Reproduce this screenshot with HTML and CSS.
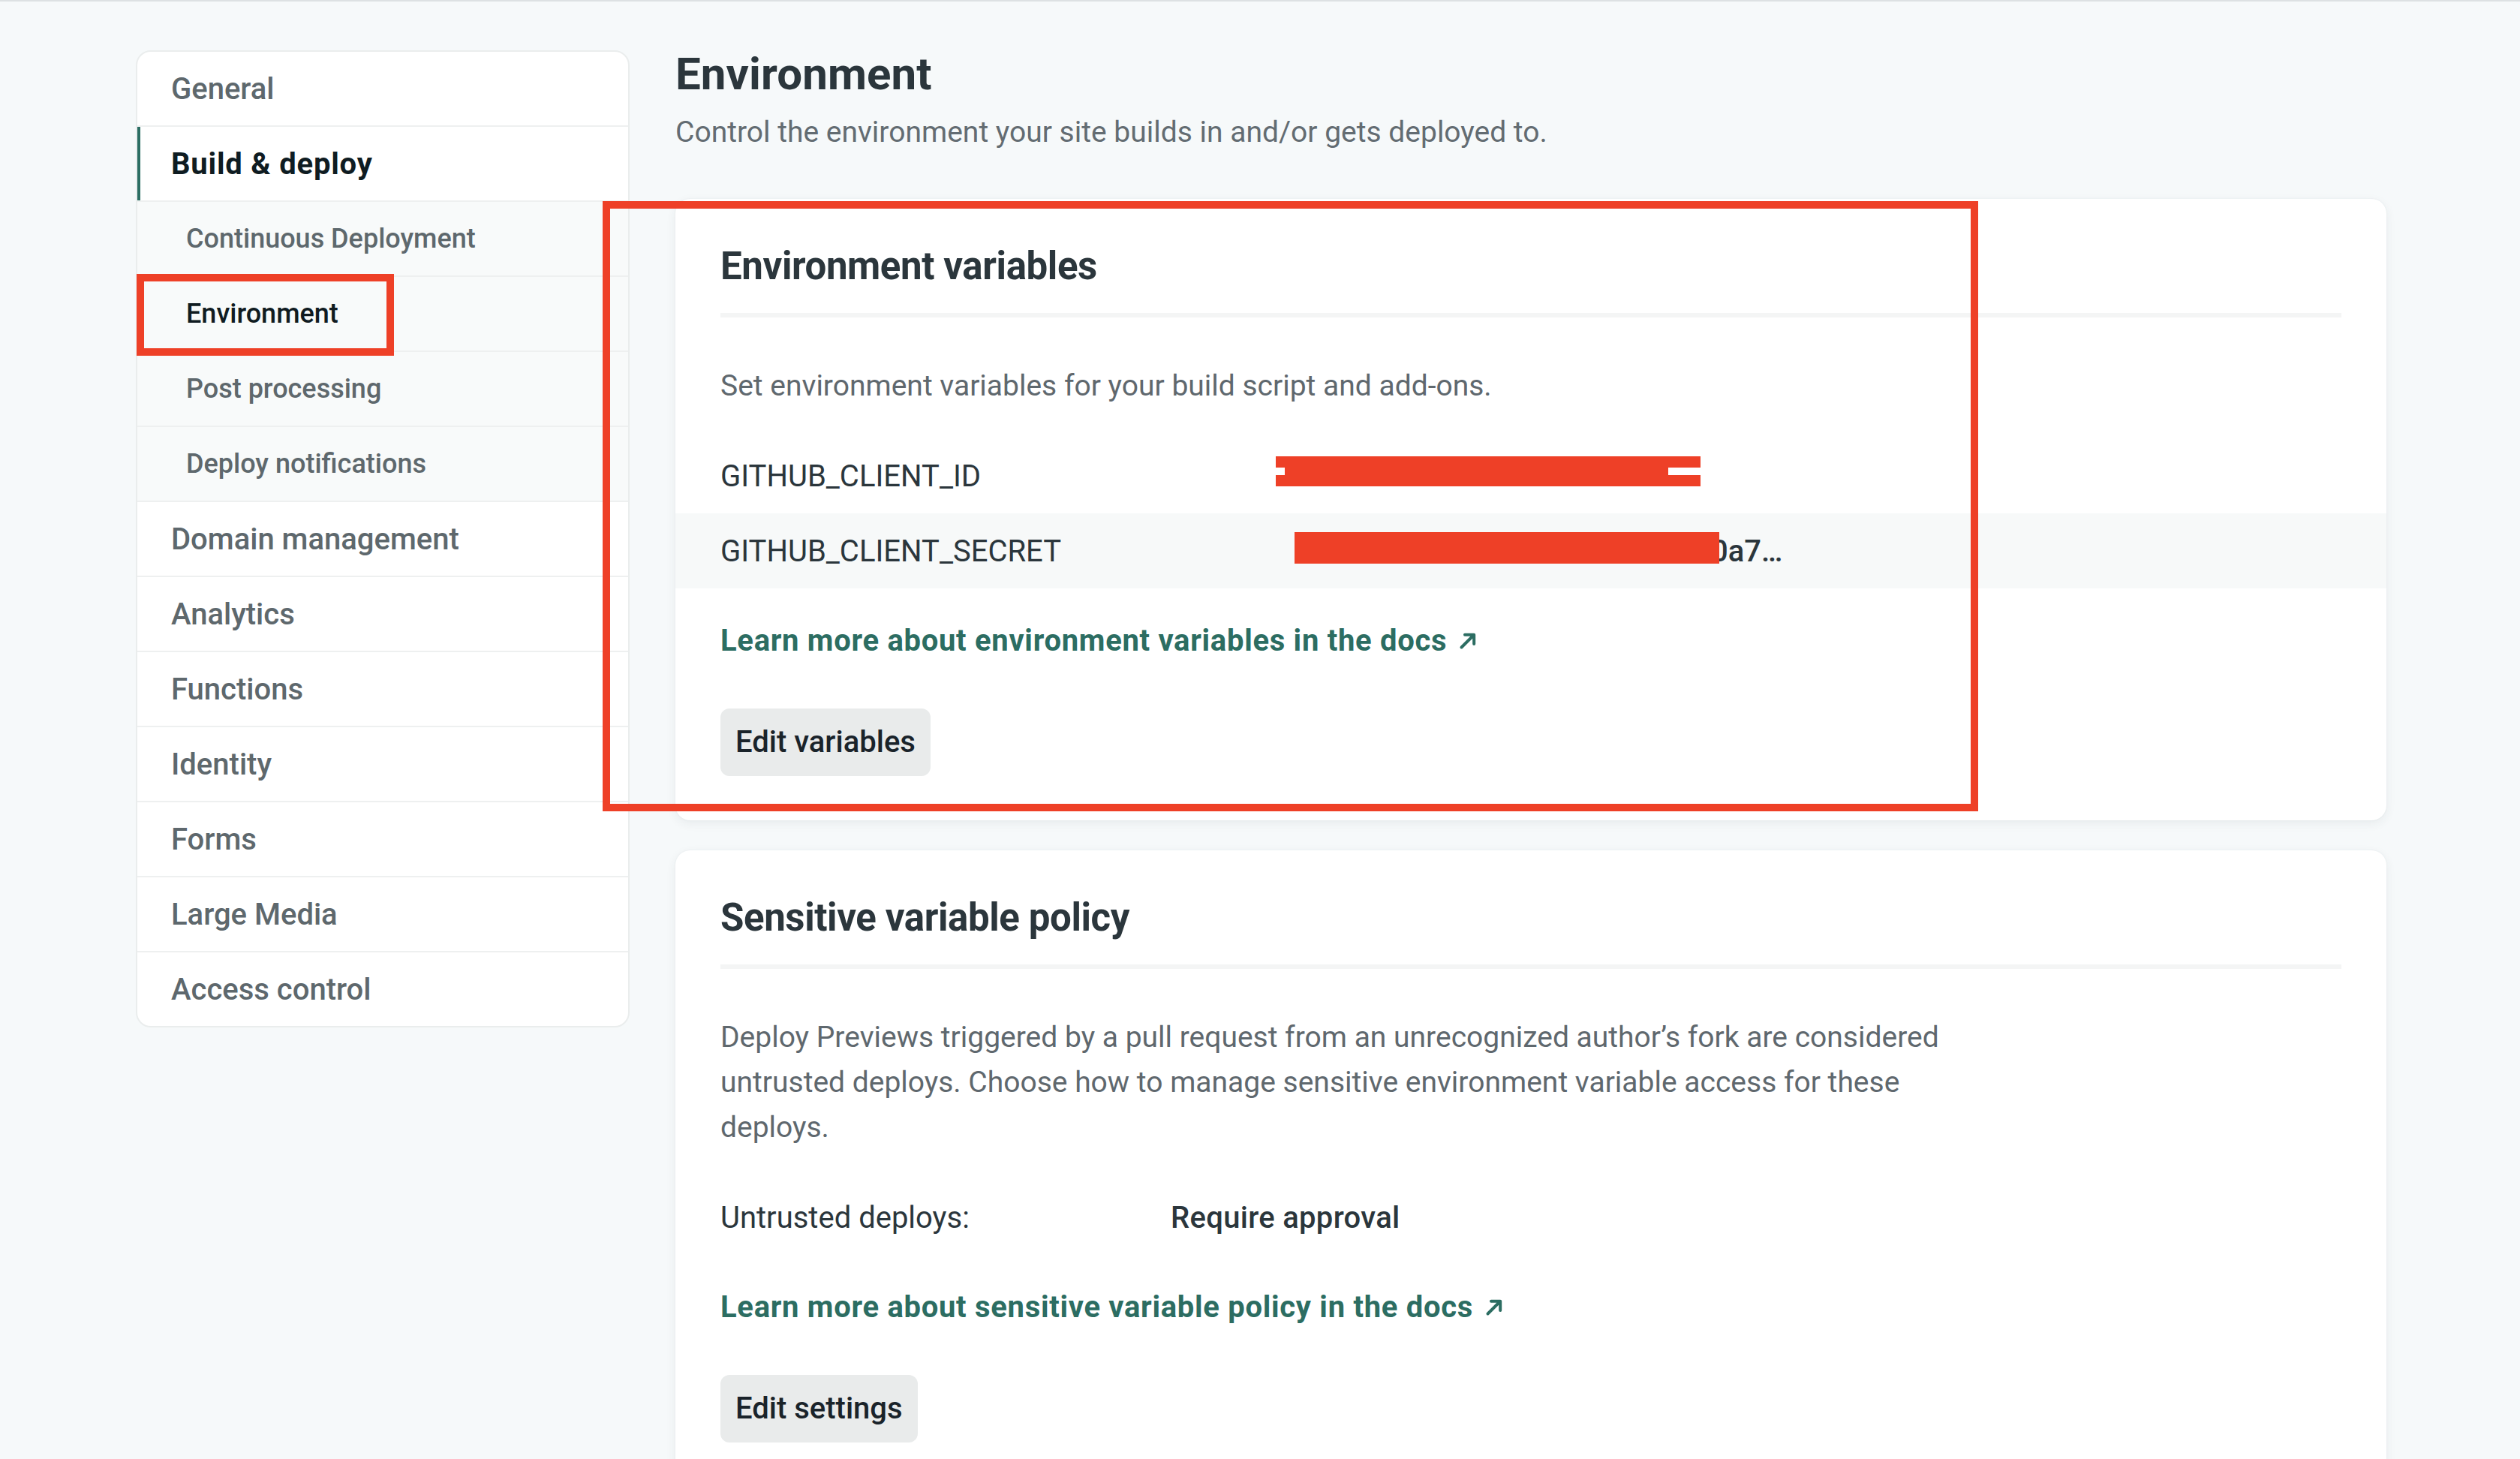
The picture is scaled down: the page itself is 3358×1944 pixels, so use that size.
FILE: index.html
```html
<!DOCTYPE html>
<html lang="en">
<head>
<meta charset="utf-8">
<title>Environment</title>
<link rel="stylesheet" href="styles.css">
</head>
<body>
<div class="topline"></div>
<div class="layout">
  <nav class="sidenav">
    <a class="nav-item">General</a>
    <a class="nav-item nav-active">Build &amp; deploy</a>
    <a class="nav-sub">Continuous Deployment</a>
    <a class="nav-sub nav-sub-active">Environment</a>
    <a class="nav-sub">Post processing</a>
    <a class="nav-sub">Deploy notifications</a>
    <a class="nav-item">Domain management</a>
    <a class="nav-item">Analytics</a>
    <a class="nav-item">Functions</a>
    <a class="nav-item">Identity</a>
    <a class="nav-item">Forms</a>
    <a class="nav-item">Large Media</a>
    <a class="nav-item nav-last">Access control</a>
  </nav>
  <main class="main">
    <h1 class="page-title">Environment</h1>
    <p class="page-sub">Control the environment your site builds in and/or gets deployed to.</p>

    <section class="card">
      <h2 class="card-title">Environment variables</h2>
      <div class="card-body">
        <p class="desc">Set environment variables for your build script and add-ons.</p>
        <div class="var-list">
          <div class="var-row">
            <span class="var-key">GITHUB_CLIENT_ID</span>
            <span class="var-value"><span class="redact redact-one"></span></span>
          </div>
          <div class="var-row var-row-alt">
            <span class="var-key">GITHUB_CLIENT_SECRET</span>
            <span class="var-value"><span class="redact redact-two"></span><span class="var-tail">0a7…</span></span>
          </div>
        </div>
        <a class="doc-link">Learn more about environment variables in the docs<svg class="ext" viewBox="0 0 24 24" aria-hidden="true"><path d="M3.5 20.5 L19 5 M8 3.8 H20.2 V16" fill="none" stroke="currentColor" stroke-width="4" stroke-linecap="round" stroke-linejoin="round"/></svg></a>
        <button class="btn">Edit variables</button>
      </div>
    </section>

    <section class="card">
      <h2 class="card-title">Sensitive variable policy</h2>
      <div class="card-body">
        <p class="desc desc-wide">Deploy Previews triggered by a pull request from an unrecognized author’s fork are considered untrusted deploys. Choose how to manage sensitive environment variable access for these deploys.</p>
        <div class="policy-row">
          <span class="policy-key">Untrusted deploys:</span>
          <span class="policy-value">Require approval</span>
        </div>
        <a class="doc-link">Learn more about sensitive variable policy in the docs<svg class="ext" viewBox="0 0 24 24" aria-hidden="true"><path d="M3.5 20.5 L19 5 M8 3.8 H20.2 V16" fill="none" stroke="currentColor" stroke-width="4" stroke-linecap="round" stroke-linejoin="round"/></svg></a>
        <button class="btn">Edit settings</button>
      </div>
    </section>
  </main>
</div>
<div class="annot annot-nav"></div>
<div class="annot annot-card"></div>
</body>
</html>
```

FILE: styles.css
```css
* { box-sizing: border-box; }

html, body {
  margin: 0;
  padding: 0;
}

body {
  background: #f6f9fa;
  font-family: Roboto, "Noto Sans", "Liberation Sans", sans-serif;
  color: #2d383e;
  width: 3358px;
  height: 1944px;
  overflow: hidden;
  position: relative;
}

.topline {
  height: 2px;
  background: #dde1e3;
}

.layout {
  display: flex;
  align-items: flex-start;
  gap: 61px;
  padding: 65px 178px 0 181px;
}

/* ---------- sidebar ---------- */
.sidenav {
  flex: none;
  width: 658px;
  background: #ffffff;
  border: 2px solid #eaeded;
  border-radius: 20px;
  overflow: hidden;
  display: flex;
  flex-direction: column;
}

.nav-item,
.nav-sub {
  display: flex;
  align-items: center;
  height: 100px;
  border-bottom: 2px solid #eef0f0;
  text-decoration: none;
  white-space: nowrap;
}

.nav-item {
  padding-left: 45px;
  font-size: 40px;
  font-weight: 500;
  color: #5e686d;
}

.nav-active {
  font-weight: 700;
  letter-spacing: 0.8px;
  color: #0f1c22;
  box-shadow: inset 4px 0 0 #2b6e63;
}

.nav-sub {
  padding-left: 65px;
  font-size: 36px;
  font-weight: 500;
  color: #5e686d;
  background: #f8fafa;
}

.nav-sub-active {
  color: #101b21;
}

.nav-last {
  border-bottom: 0;
  height: 98px;
}

/* ---------- main ---------- */
.main {
  flex: 1;
  min-width: 0;
  padding-top: 2px;
}

.page-title {
  margin: 0;
  font-size: 60px;
  line-height: 60px;
  font-weight: 700;
  letter-spacing: 0.1px;
  color: #2b363c;
}

.page-sub {
  margin: 17px 0 0;
  font-size: 39px;
  line-height: 60px;
  color: #636c72;
}

.card {
  margin-top: 59px;
  background: #ffffff;
  border-radius: 20px;
  padding: 60px 60px 59px;
  box-shadow: 0 4px 14px rgba(40, 55, 65, 0.07), 0 0 3px rgba(40, 55, 65, 0.05);
}

.card + .card {
  margin-top: 40px;
}

.card-title {
  margin: 0;
  font-size: 51px;
  line-height: 60px;
  font-weight: 700;
  letter-spacing: -0.4px;
  color: #2b363c;
  padding-bottom: 32px;
  border-bottom: 6px solid #f4f5f5;
}

.card-body {
  padding-top: 61px;
  display: flex;
  flex-direction: column;
  align-items: flex-start;
}

.desc {
  margin: 0;
  font-size: 39px;
  line-height: 60px;
  color: #5f686e;
}

.desc-wide {
  max-width: 1650px;
}

.var-list {
  align-self: stretch;
  margin: 40px -60px 0;
}

.var-row {
  display: flex;
  align-items: center;
  height: 100px;
  padding: 0 60px;
}

.var-row-alt {
  background: #f7f9f9;
}

.var-key {
  flex: none;
  width: 740px;
  font-size: 40px;
  color: #2b363c;
}

.var-value {
  display: flex;
  align-items: center;
  font-size: 40px;
  font-weight: 500;
  color: #2b363c;
}

.redact {
  display: block;
  background-color: #ee4027;
  position: relative;
  z-index: 1;
}

.redact-one {
  width: 566px;
  height: 40px;
  margin-bottom: 12px;
  background:
    linear-gradient(#ffffff, #ffffff) 0 15px / 12px 10px no-repeat,
    linear-gradient(#ffffff, #ffffff) 523px 15px / 43px 10px no-repeat,
    #ee4027;
}

.redact-two {
  width: 566px;
  height: 42px;
  margin-left: 25px;
  margin-bottom: 8px;
}

.var-tail {
  margin-left: -11px;
}

.policy-row {
  display: flex;
  align-items: center;
  height: 100px;
  margin-top: 40px;
  font-size: 40px;
  color: #2b363c;
}

.policy-key {
  width: 600px;
}

.policy-value {
  font-weight: 500;
  letter-spacing: 0.3px;
}

.doc-link {
  display: inline-flex;
  align-items: center;
  margin-top: 40px;
  font-size: 40px;
  line-height: 60px;
  font-weight: 700;
  letter-spacing: 0.7px;
  color: #2c6d62;
  text-decoration: none;
  white-space: nowrap;
}

.ext {
  width: 24px;
  height: 24px;
  margin-left: 16px;
  color: #2c6d62;
}

.btn {
  margin-top: 60px;
  height: 90px;
  padding: 0 20px;
  border: 0;
  border-radius: 12px;
  background: #e9ebeb;
  font-family: inherit;
  font-size: 40px;
  font-weight: 500;
  color: #1a232a;
  line-height: 90px;
}

/* ---------- screenshot annotations ---------- */
.annot {
  position: absolute;
  border: 10px solid #ee4027;
  pointer-events: none;
}

.annot-nav {
  left: 182px;
  top: 365px;
  width: 343px;
  height: 109px;
}

.annot-card {
  left: 803px;
  top: 268px;
  width: 1833px;
  height: 813px;
}
```
